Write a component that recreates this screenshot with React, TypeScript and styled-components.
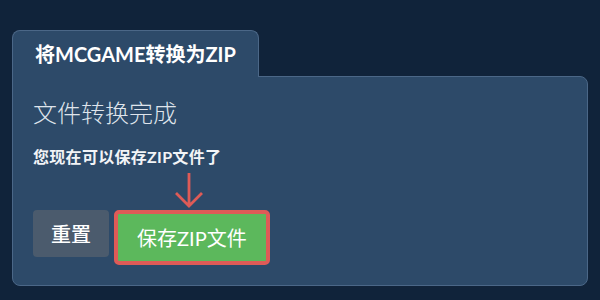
import styled, { createGlobalStyle } from "styled-components";

const Global = createGlobalStyle`
  html, body {
    margin: 0;
    padding: 0;
    background: #10233a;
    font-family: Lato, "Noto Sans CJK SC", sans-serif;
  }
`;

const Page = styled.div`
  width: 600px;
  height: 300px;
  box-sizing: border-box;
  padding: 30px 12px 14px;
`;

const Tab = styled.div`
  position: relative;
  z-index: 1;
  display: inline-flex;
  align-items: center;
  box-sizing: border-box;
  height: 47px;
  margin-bottom: -1px;
  padding: 0 22px 2px 22px;
  background: #2d4a69;
  border: 1px solid #4b6787;
  border-bottom: none;
  border-radius: 8px 8px 0 0;
  color: #ffffff;
  font-size: 20px;
  font-weight: 700;
`;

const Panel = styled.div`
  box-sizing: border-box;
  height: 210px;
  padding: 22px 20px 0;
  background: #2d4a69;
  border: 1px solid #4b6787;
  border-radius: 0 8px 8px 8px;
`;

const Heading = styled.div`
  color: #dfe4eb;
  font-size: 24px;
  font-weight: 300;
  line-height: 28px;
`;

const Message = styled.div`
  margin-top: 20px;
  color: #f2f4f7;
  font-size: 16px;
  font-weight: 700;
  line-height: 20px;
  letter-spacing: 0.3px;
`;

const ArrowWrap = styled.div`
  height: 43px;
  padding-left: 140px;
`;

const Actions = styled.div`
  display: flex;
  align-items: flex-start;
  gap: 5px;
`;

const Button = styled.button<{ $variant: "reset" | "save" }>`
  box-sizing: border-box;
  height: ${(p) => (p.$variant === "save" ? "55px" : "47px")};
  padding: 0 ${(p) => (p.$variant === "save" ? "19px" : "18px")};
  border: ${(p) => (p.$variant === "save" ? "4px solid #de5b57" : "none")};
  border-radius: ${(p) => (p.$variant === "save" ? "5px" : "4px")};
  background: ${(p) => (p.$variant === "save" ? "#5cb85c" : "#4b5b6d")};
  color: #ffffff;
  font-family: Lato, "Noto Sans CJK SC", sans-serif;
  font-size: 20px;
  font-weight: ${(p) => (p.$variant === "save" ? 400 : 500)};
  cursor: pointer;
`;

function DownArrow() {
  return (
    <svg width="32" height="43" viewBox="0 0 32 43">
      <path
        d="M16 6 V39 M3 26 L16 39 L29 26"
        fill="none"
        stroke="#de5b57"
        strokeWidth="2.8"
      />
    </svg>
  );
}

export default function App() {
  return (
    <Page>
      <Global />
      <Tab>将MCGAME转换为ZIP</Tab>
      <Panel>
        <Heading>文件转换完成</Heading>
        <Message>您现在可以保存ZIP文件了</Message>
        <ArrowWrap>
          <DownArrow />
        </ArrowWrap>
        <Actions>
          <Button $variant="reset">重置</Button>
          <Button $variant="save">保存ZIP文件</Button>
        </Actions>
      </Panel>
    </Page>
  );
}
